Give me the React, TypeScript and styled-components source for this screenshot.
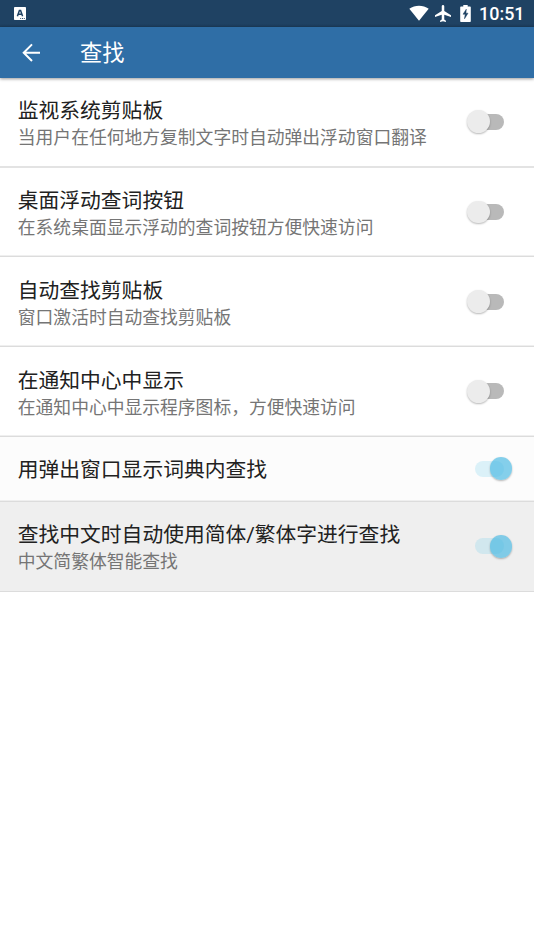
import React, { useState } from 'react';
import styled, { createGlobalStyle } from 'styled-components';

const GlobalStyle = createGlobalStyle`
  html, body, #root { height: 100%; }
  body { margin: 0; background: #fff; overflow: hidden; }
  * { box-sizing: border-box; }
`;

const Screen = styled.div`
  width: 100%;
  height: 100%;
  display: flex;
  flex-direction: column;
  background: #fff;
  font-family: Roboto, 'Noto Sans CJK SC', sans-serif;
`;

const StatusBar = styled.div`
  height: 27px;
  flex: none;
  display: flex;
  align-items: center;
  justify-content: space-between;
  padding: 0 9.5px 0 14px;
  background: linear-gradient(#1f4263 0, #1f4263 24px, #1b3b59 27px);
  color: #fff;
`;

const StatusIcons = styled.div`
  display: flex;
  align-items: center;
  height: 27px;
`;

const Icon = styled.svg<{ $gap?: number }>`
  display: block;
  flex: none;
  margin-right: ${(p) => p.$gap ?? 0}px;
`;

const Clock = styled.span`
  font-size: 17.9px;
  line-height: 27px;
  font-weight: 500;
`;

const AppBar = styled.header`
  height: 51px;
  flex: none;
  display: flex;
  align-items: center;
  padding-left: 20px;
  background: #2f6ea6;
  color: #fff;
  box-shadow: 0 1px 3px rgba(0, 0, 0, 0.4);
  z-index: 1;
`;

const BackButton = styled.button`
  width: 60px;
  padding: 0;
  border: 0;
  background: none;
  color: inherit;
`;

const Title = styled.h1`
  margin: 0;
  font-size: 22.2px;
  line-height: 32px;
  font-weight: 400;
`;

const Row = styled.div<{ $single?: boolean; $bg?: string }>`
  height: ${(p) => (p.$single ? 65.2 : 89.7)}px;
  flex: none;
  display: flex;
  align-items: center;
  justify-content: space-between;
  padding: 0 20.5px 0 17.8px;
  background: ${(p) => p.$bg ?? '#fff'};
  border-bottom: 1px solid #dcdcdc;
  box-shadow: inset 0 -1px #efefef;

  &:first-child {
    border-bottom: 2px solid #e3e3e3;
    box-shadow: none;
  }
`;

const Texts = styled.div<{ $single?: boolean }>`
  padding-top: ${(p) => (p.$single ? 3 : 5.2)}px;
`;

const Label = styled.div`
  font-size: 20.77px;
  line-height: 27px;
  color: #212121;
  white-space: nowrap;
`;

const Summary = styled.div`
  font-size: 17.8px;
  line-height: 26px;
  color: #757575;
  white-space: nowrap;
`;

const List = styled.main`
  display: flex;
  flex-direction: column;
`;

const SwitchButton = styled.button`
  width: 47px;
  height: 24px;
  padding: 0;
  border: 0;
  background: none;
  position: relative;
  flex: none;
`;

const Track = styled.span<{ $on: boolean }>`
  position: absolute;
  left: 8.2px;
  top: 4px;
  width: 29.4px;
  height: 16px;
  border-radius: 8px;
  background: ${(p) => (p.$on ? 'rgba(79, 195, 235, 0.19)' : '#b9b9b9')};
`;

const Thumb = styled.span<{ $on: boolean }>`
  position: absolute;
  left: ${(p) => (p.$on ? 23 : 0.5)}px;
  top: 0.5px;
  width: 22.8px;
  height: 22.8px;
  border-radius: 50%;
  background: ${(p) => (p.$on ? 'rgba(70, 183, 226, 0.66)' : '#ececec')};
  box-shadow: 0 1px 2px rgba(0, 0, 0, 0.28);
`;

interface Setting {
  label: string;
  summary?: string;
  on?: boolean;
  bg?: string;
}

const SETTINGS: Setting[] = [
  { label: '监视系统剪贴板', summary: '当用户在任何地方复制文字时自动弹出浮动窗口翻译' },
  { label: '桌面浮动查词按钮', summary: '在系统桌面显示浮动的查词按钮方便快速访问' },
  { label: '自动查找剪贴板', summary: '窗口激活时自动查找剪贴板' },
  { label: '在通知中心中显示', summary: '在通知中心中显示程序图标，方便快速访问' },
  { label: '用弹出窗口显示词典内查找', on: true, bg: '#fcfcfc' },
  { label: '查找中文时自动使用简体/繁体字进行查找', summary: '中文简繁体智能查找', on: true, bg: '#efefef' },
];

function SettingRow({ label, summary, on: initial = false, bg }: Setting) {
  const [on, setOn] = useState(initial);
  return (
    <Row $single={!summary} $bg={bg}>
      <Texts $single={!summary}>
        <Label>{label}</Label>
        {summary && <Summary>{summary}</Summary>}
      </Texts>
      <SwitchButton role="switch" aria-checked={on} aria-label={label} onClick={() => setOn(!on)}>
        <Track $on={on} />
        <Thumb $on={on} />
      </SwitchButton>
    </Row>
  );
}

export default function App() {
  return (
    <Screen>
      <GlobalStyle />
      <StatusBar>
        <Icon width="12" height="13" viewBox="0 0 12 13">
          <rect width="12" height="13" rx="0.8" fill="#fff" />
          <path d="M3.4 9.3 5.4 3.5h1.2l2 5.8M4.4 7.2h3.2" fill="none" stroke="#1f4263" strokeWidth="1.5" />
          <path d="M6.2 11.5h1M8 11.5h1M9.8 11.5h1" stroke="#1f4263" strokeWidth="0.9" />
        </Icon>
        <StatusIcons>
          <Icon $gap={6} width="20" height="17" viewBox="0 0 20 17">
            <path d="M.3 3.700C6-.3 14-.3 19.700 3.700L10 15.700z" fill="#fff" />
          </Icon>
          <Icon $gap={9} width="16" height="17" viewBox="2 2 19 20" preserveAspectRatio="none">
            <path d="M21 16v-2l-8-5V3.5C13 2.7 12.3 2 11.5 2S10 2.7 10 3.5V9l-8 5v2l8-2.5V19l-2 1.5V22l3.5-1 3.5 1v-1.500L13 19v-5.500z" fill="#fff" />
          </Icon>
          <Icon $gap={8} width="11" height="17" viewBox="0 0 11 17">
            <path d="M3.300 0h4.400v1.500H10q.8 0 .8.800v13.900q0 .8-.8.800H1q-.8 0-.8-.8V2.300q0-.8.8-.8h2.300z" fill="#fff" />
            <path d="M6.300 4.200 3 9.200h2.200l-.7 4.600 3.500-5.600H5.900z" fill="#1f4263" stroke="#1f4263" strokeWidth="0.500" />
          </Icon>
          <Clock>10:51</Clock>
        </StatusIcons>
      </StatusBar>
      <AppBar>
        <BackButton aria-label="返回">
          <Icon width="24" height="24" viewBox="0 0 24 24">
            <path d="M20 11.700H4M12 3.400 3.700 11.700l8.300 8.300" fill="none" stroke="#fff" strokeWidth="2" />
          </Icon>
        </BackButton>
        <Title>查找</Title>
      </AppBar>
      <List>
        {SETTINGS.map((s) => (
          <SettingRow key={s.label} {...s} />
        ))}
      </List>
    </Screen>
  );
}
